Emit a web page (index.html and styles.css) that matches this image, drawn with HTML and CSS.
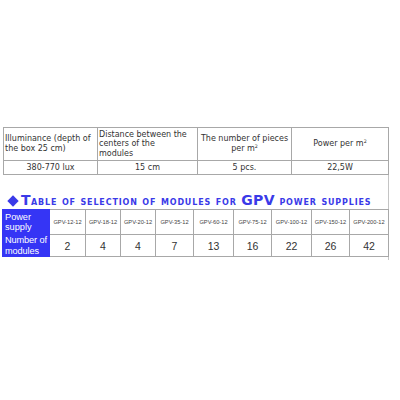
FILE: index.html
```html
<!DOCTYPE html>
<html>
<head>
<meta charset="utf-8">
<link rel="stylesheet" href="styles.css">
</head>
<body>
<div class="wrap">
  <table class="spec">
    <colgroup><col class="c1"><col class="c2"><col class="c3"><col class="c4"></colgroup>
    <tr class="head">
      <td class="left">Illuminance (depth of<br>the box 25 cm)</td>
      <td class="left">Distance between the<br>centers of the<br>modules</td>
      <td>The number of pieces<br>per m<sup>2</sup></td>
      <td>Power per m<sup>2</sup></td>
    </tr>
    <tr class="data">
      <td>380-770 lux</td>
      <td>15 cm</td>
      <td>5 pcs.</td>
      <td>22,5W</td>
    </tr>
  </table>
  <h2 class="title"><span class="diamond"></span><span class="big">T</span>able of selection of modules for <span class="gpv">GPV</span> power supplies</h2>
  <table class="sel">
    <colgroup><col class="k"><col class="m1"><col class="m2"><col class="m3"><col class="m4"><col class="m5"><col class="m6"><col class="m7"><col class="m8"><col class="m9"></colgroup>
    <tr class="r1">
      <th>Power supply</th>
      <td>GPV-12-12</td><td>GPV-18-12</td><td>GPV-20-12</td><td>GPV-35-12</td><td>GPV-60-12</td><td>GPV-75-12</td><td>GPV-100-12</td><td>GPV-150-12</td><td>GPV-200-12</td>
    </tr>
    <tr class="r2">
      <th>Number of modules</th>
      <td>2</td><td>4</td><td>4</td><td>7</td><td>13</td><td>16</td><td>22</td><td>26</td><td>42</td>
    </tr>
  </table>
</div>
</body>
</html>
```
FILE: styles.css
```css
html, body { margin: 0; padding: 0; background: #fff; }
body { width: 400px; height: 400px; overflow: hidden; }
.wrap {
  margin: 127px 0 0 2px;
  width: 386px;
  border-right: 1px solid #c4c4c4;
  padding-bottom: 3px;
}
table { border-collapse: collapse; table-layout: fixed; }
.spec {
  margin-left: 1px;
  width: 386px;
  font-family: "DejaVu Sans", sans-serif;
  font-size: 8px;
  color: #333;
}
.spec td { border: 1px solid #a8a8a8; text-align: center; padding: 0 1px; white-space: nowrap; overflow: hidden; }
.spec .c1 { width: 94px; }
.spec .c2 { width: 100px; }
.spec .c3 { width: 94px; }
.spec .c4 { width: 97px; }
.spec .head td { height: 32px; line-height: 9.6px; }
.spec .head td.left { text-align: left; }
.spec .data td { height: 13px; line-height: 10px; }
sup { font-size: 4.8px; vertical-align: 3px; line-height: 0; }
.title {
  margin: 17px 0 0 0;
  height: 17px;
  display: flex;
  align-items: baseline;
  font-family: "DejaVu Sans", sans-serif;
  font-weight: bold;
  font-variant: small-caps;
  font-size: 10.8px;
  letter-spacing: 0.85px;
  color: #3a3ae8;
  white-space: pre;
}
.diamond {
  display: inline-block;
  width: 8px; height: 8px;
  background: #3a3ae8;
  transform: rotate(45deg);
  margin: 0 4px 0 7px;
  align-self: center;
}
.big { font-size: 14px; letter-spacing: 0.5px; }
.gpv { font-size: 14px; letter-spacing: 0.3px; }
.sel {
  width: 386px;
  font-family: "Liberation Sans", sans-serif;
  color: #333;
}
.sel th, .sel td { border: 1px solid #a8a8a8; text-align: center; padding: 0; }
.sel th {
  background: #3535f5;
  color: #fff;
  font-weight: normal;
  text-align: left;
  font-size: 9.2px;
  line-height: 10.5px;
  padding-left: 2px;
  border-color: #3535f5;
}
.sel .k { width: 47px; }
.sel .m1 { width: 36px; }
.sel .m2 { width: 35px; }
.sel .m3 { width: 35px; }
.sel .m4 { width: 38px; }
.sel .m5 { width: 40px; }
.sel .m6 { width: 38px; }
.sel .m7 { width: 40px; }
.sel .m8 { width: 38px; }
.sel .m9 { width: 39px; }
.sel .r1 td { font-size: 5.7px; height: 24px; color: #444; }
.sel .r1 th { height: 24px; }
.sel .r2 td { font-size: 10.5px; height: 21px; }
.sel .r2 th { height: 21px; letter-spacing: -0.1px; }
```
